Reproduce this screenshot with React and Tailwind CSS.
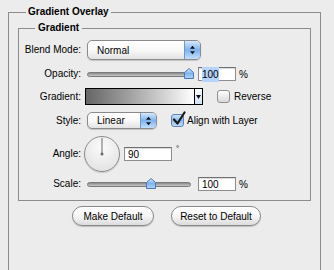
import React from "react";

function Popup({ className, text }) {
  return (
    <div
      className={
        "flex items-stretch rounded-[5px] border border-[#8a8a8a] bg-gradient-to-b from-white via-[#f9f9f9] to-[#e2e2e2] shadow-[0_1px_1px_rgba(0,0,0,0.18)] overflow-hidden " +
        className
      }
    >
      <div className="flex-1 flex items-center pl-[9px] text-[10px] text-black">{text}</div>
      <div className="w-[16px] flex items-center justify-center border-l border-[#6f97c9] bg-gradient-to-b from-[#d6e8fb] via-[#7eb3ee] to-[#c3defa]">
        <svg width="7" height="10" viewBox="0 0 7 10">
          <path d="M3.5 0.8 L6 3.8 L1 3.8Z M3.5 9.2 L6 6.2 L1 6.2Z" fill="#111" />
        </svg>
      </div>
    </div>
  );
}

function Thumb({ className }) {
  return (
    <svg className={"absolute top-[1px] " + className} width="10" height="11" viewBox="0 0 10 11">
      <defs>
        <linearGradient id="tg" x1="0" y1="0" x2="0" y2="1">
          <stop offset="0" stopColor="#d9ebff" />
          <stop offset="0.5" stopColor="#7fb3ee" />
          <stop offset="1" stopColor="#b7d7fa" />
        </linearGradient>
      </defs>
      <path d="M0.5 4.5 L5 0.5 L9.5 4.5 L9.5 10.5 L0.5 10.5Z" fill="url(#tg)" stroke="#4a78b4" strokeWidth="1" />
    </svg>
  );
}

function Slider({ thumbClass }) {
  return (
    <div className="relative w-[104px] h-[14px]">
      <div className="absolute left-0 right-0 top-[5px] h-[5px] rounded-full border border-[#7a7a7a] bg-gradient-to-b from-[#8a8a8a] to-[#c9c9c9]" />
      <Thumb className={thumbClass} />
    </div>
  );
}

function Field({ className, children }) {
  return (
    <div
      className={
        "h-[14px] border border-[#8d8d8d] border-t-[#6f6f6f] bg-white flex items-center pl-[3px] text-[10px] text-black shadow-[inset_0_1px_1px_rgba(0,0,0,0.15)] " +
        className
      }
    >
      {children}
    </div>
  );
}

function Check({ checked }) {
  return (
    <div className="relative w-[13px] h-[13px]">
      <div
        className={
          "w-[13px] h-[13px] rounded-[3px] border " +
          (checked
            ? "border-[#5a82b8] bg-gradient-to-b from-[#cfe3fb] via-[#8dbbef] to-[#c4dcf7]"
            : "border-[#8e8e8e] bg-gradient-to-b from-white to-[#d9d9d9]")
        }
      />
      {checked && (
        <svg className="absolute left-[1px] -top-[3px]" width="14" height="15" viewBox="0 0 14 15">
          <path d="M2 8.5 L5.5 12.5 L12.5 1.5" fill="none" stroke="#1a1a1a" strokeWidth="2.2" strokeLinecap="round" strokeLinejoin="round" />
        </svg>
      )}
    </div>
  );
}

function Button({ className, children }) {
  return (
    <div
      className={
        "h-[20px] rounded-full border border-[#8a8a8a] bg-gradient-to-b from-white via-[#f6f6f6] to-[#dcdcdc] shadow-[0_1px_1px_rgba(0,0,0,0.2)] flex items-center justify-center text-[10px] text-black " +
        className
      }
    >
      {children}
    </div>
  );
}

function Label({ children }) {
  return <div className="w-[62px] text-right text-[10px] text-black leading-none">{children}</div>;
}

export default function App() {
  return (
    <div className="w-[334px] h-[270px] bg-[#ececec] overflow-hidden pt-[12px] pl-[8px] font-['Liberation_Sans',Arial,sans-serif]">
      <div className="relative w-[313px] h-[300px] border border-b-0 border-[#8c8c8c]">
        <div className="absolute left-[17px] -top-[8px] px-[2px] bg-[#ececec] text-[10px] font-bold text-black leading-[14px]">
          Gradient Overlay
        </div>

        <div className="relative ml-[9px] mt-[15px] w-[293px] border border-[#8c8c8c] pt-[11px] pb-[9px] flex flex-col">
          <div className="absolute left-[16px] -top-[8px] px-[3px] bg-[#ececec] text-[10px] font-bold text-black leading-[14px]">
            Gradient
          </div>

          <div className="flex items-center h-[20px]">
            <Label>Blend Mode:</Label>
            <Popup className="ml-[6px] w-[114px] h-[20px]" text="Normal" />
          </div>

          <div className="flex items-center h-[14px] mt-[7px]">
            <Label>Opacity:</Label>
            <div className="ml-[6px]">
              <Slider thumbClass="left-[97px]" />
            </div>
            <Field className="ml-[7px] w-[38px]">
              <span className="bg-[#b4d4fc]">100</span>
            </Field>
            <span className="ml-[3px] text-[10px] text-black">%</span>
          </div>

          <div className="flex items-center h-[17px] mt-[7px]">
            <Label>Gradient:</Label>
            <div className="ml-[4px] w-[118px] h-[17px] border border-black flex">
              <div className="flex-1 bg-gradient-to-r from-[#666666] via-[#b0b0b0] to-white" />
              <div className="w-[8px] border-l border-black bg-gradient-to-b from-white to-[#cfe2f7] flex items-center justify-center">
                <svg width="5" height="4" viewBox="0 0 5 4">
                  <path d="M0 0 L5 0 L2.5 4Z" fill="#111" />
                </svg>
              </div>
            </div>
            <div className="ml-[14px]">
              <Check checked={false} />
            </div>
            <span className="ml-[4px] text-[10px] text-black">Reverse</span>
          </div>

          <div className="flex items-center h-[17px] mt-[7px]">
            <Label>Style:</Label>
            <Popup className="ml-[6px] w-[70px] h-[17px]" text="Linear" />
            <div className="ml-[14px]">
              <Check checked={true} />
            </div>
            <span className="ml-[3px] text-[10px] text-black">Align with Layer</span>
          </div>

          <div className="flex items-center h-[36px] mt-[7px]">
            <Label>Angle:</Label>
            <div className="ml-[3px] w-[36px] h-[36px] rounded-full border border-[#8a8a8a] bg-[radial-gradient(circle_at_50%_30%,#fbfbfb,#dedede)] shadow-[0_1px_1px_rgba(0,0,0,0.15)] flex items-center justify-center">
              <svg width="34" height="34" viewBox="0 0 34 34">
                <line x1="17" y1="17" x2="17" y2="1" stroke="#6a6a6a" strokeWidth="1" />
                <circle cx="17" cy="17" r="1.5" fill="#6a6a6a" />
              </svg>
            </div>
            <Field className="ml-[4px] w-[48px]">90</Field>
            <span className="ml-[4px] self-start mt-[9px] text-[8px] text-black leading-none">°</span>
          </div>

          <div className="flex items-center h-[14px] mt-[5px]">
            <Label>Scale:</Label>
            <div className="ml-[6px]">
              <Slider thumbClass="left-[59px]" />
            </div>
            <Field className="ml-[7px] w-[38px]">100</Field>
            <span className="ml-[3px] text-[10px] text-black">%</span>
          </div>
        </div>

        <div className="flex mt-[5px] pl-[63px] gap-[17px]">
          <Button className="w-[82px]">Make Default</Button>
          <Button className="w-[90px]">Reset to Default</Button>
        </div>
      </div>
    </div>
  );
}
